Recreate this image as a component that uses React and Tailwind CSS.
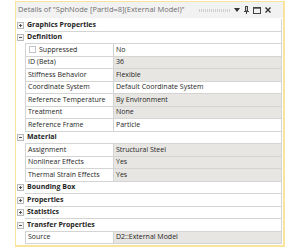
import React from 'react';

const rows = [
  { cat: 'Graphics Properties', open: false },
  { cat: 'Definition', open: true },
  { name: 'Suppressed', value: 'No', check: true },
  { name: 'ID (Beta)', value: '36', ro: true },
  { name: 'Stiffness Behavior', value: 'Flexible', ro: true },
  { name: 'Coordinate System', value: 'Default Coordinate System' },
  { name: 'Reference Temperature', value: 'By Environment', ro: true },
  { name: 'Treatment', value: 'None', ro: true },
  { name: 'Reference Frame', value: 'Particle' },
  { cat: 'Material', open: true },
  { name: 'Assignment', value: 'Structural Steel', ro: true },
  { name: 'Nonlinear Effects', value: 'Yes', ro: true },
  { name: 'Thermal Strain Effects', value: 'Yes', ro: true },
  { cat: 'Bounding Box', open: false },
  { cat: 'Properties', open: false },
  { cat: 'Statistics', open: false },
  { cat: 'Transfer Properties', open: true },
  { name: 'Source', value: 'D2::External Model', ro: true },
];

const Toggle = ({ open }) => {
  return (
    <div className="w-[7px] h-[7px] border border-[#b9b9b9] bg-[#f4f4f4] flex items-center justify-center relative">
      <div className="w-[3px] h-px bg-[#555]" />
      {!open && <div className="absolute w-px h-[3px] bg-[#555]" />}
    </div>
  );
};

const Row = ({ row }) => {
  if (row.cat) {
    return (
      <div className="flex h-[12.5px]">
        <div className="w-[9px] flex items-center justify-center">
          <Toggle open={row.open} />
        </div>
        <div className="flex-1 flex items-center pl-[2px] font-bold border-b border-r border-[#d4d4d4]">{row.cat}</div>
      </div>
    );
  }
  return (
    <div className="flex h-[12.5px]">
      <div className="w-[9px]" />
      <div className="w-[88px] flex items-center pl-[2px] border-l border-b border-[#d4d4d4] bg-white">
        {row.check && <div className="w-[7px] h-[7px] border border-[#c4c4c4] bg-white ml-px mr-[3px]" />}
        {row.name}
      </div>
      <div
        className={`flex-1 flex items-center pl-[2px] border-l border-b border-r border-[#d4d4d4] ${
          row.ro ? 'bg-[#e8e6e2]' : 'bg-white'
        }`}
      >
        {row.value}
      </div>
    </div>
  );
};

export default function App() {
  return (
    <div className="w-[300px] h-[250px] bg-white pt-px" style={{ fontFamily: '"Open Sans", sans-serif' }}>
      <div className="ml-[15px] w-[270px] h-[246px] border-l border-t border-r-2 border-b-2 border-[#fae39a] flex flex-col text-[7px] text-[#1e1e1e]">
        <div className="h-[16px] flex items-center bg-[#f2f2f2] pl-[2px] pr-[12px] text-[7.5px] text-[#6f6f6f]">
          <span>Details of "SphNode [PartId=8](External Model)"</span>
          <div className="ml-[14px] w-[32px] h-[3px] bg-[repeating-linear-gradient(90deg,#cfcfcf_0_1px,transparent_1px_2px)]" />
          <div className="flex-1" />
          <div className="flex items-center gap-[4px] text-[#333]">
            <svg width="6" height="4" viewBox="0 0 6 4">
              <path d="M0 0h6L3 4z" fill="#333" />
            </svg>
            <svg width="5" height="8" viewBox="0 0 5 8">
              <path d="M1 0h3v5H1z M0 5h5v1H0z M2 6h1v2H2z" fill="#444" />
              <path d="M2.2 1h0.8v3.5H2.2z" fill="#f2f2f2" />
            </svg>
            <svg width="8" height="7" viewBox="0 0 8 7">
              <rect x="0.5" y="0.5" width="7" height="6" fill="none" stroke="#444" />
              <rect x="0.5" y="0.5" width="7" height="1.2" fill="#444" />
            </svg>
            <svg width="6" height="6" viewBox="0 0 6 6">
              <path d="M0.5 0.5L5.5 5.5M5.5 0.5L0.5 5.5" stroke="#333" strokeWidth="1.4" />
            </svg>
          </div>
        </div>
        <div className="flex-1 bg-white pr-[1px] pt-px">
          {rows.map((row, index) => (
            <Row key={index} row={row} />
          ))}
        </div>
      </div>
    </div>
  );
}
